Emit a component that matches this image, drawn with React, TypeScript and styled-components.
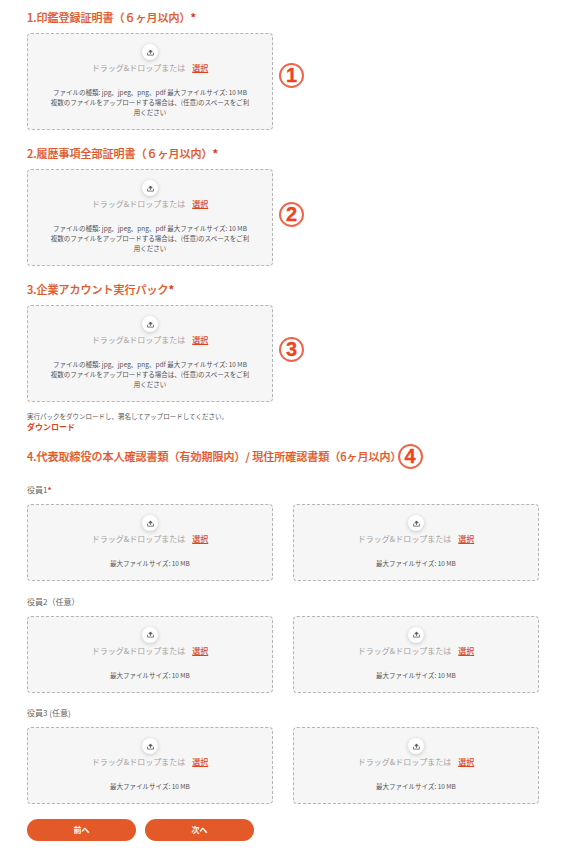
import styled, { createGlobalStyle } from "styled-components";

const GlobalStyle = createGlobalStyle`
  html, body {
    margin: 0;
    padding: 0;
    background: #fff;
    font-family: "Noto Sans CJK JP", "Noto Sans", sans-serif;
  }
`;

const LONG_NOTE = [
  "ファイルの種類: jpg、jpeg、png、pdf 最大ファイルサイズ: 10 MB",
  "複数のファイルをアップロードする場合は、(任意)のスペースをご利用ください",
];

const UploadBox = ({ short }: { short?: boolean }) => (
  <Box $short={short}>
    <IconCircle>
      <svg width="7" height="7" viewBox="0 0 24 24" fill="none" stroke="#555" strokeWidth="2.6" strokeLinecap="round" strokeLinejoin="round">
        <path d="M2 14v7h20v-7" />
        <path d="M12 16V6" />
        <path d="M7 9l5-6 5 6z" fill="#555" />
      </svg>
    </IconCircle>
    <DropLine>
      ドラッグ&ドロップまたは<Pick>選択</Pick>
    </DropLine>
    {short ? (
      <Note>最大ファイルサイズ: 10 MB</Note>
    ) : (
      <Note>
        {LONG_NOTE[0]}
        <br />
        {LONG_NOTE[1]}
      </Note>
    )}
  </Box>
);

const App = () => {
  return (
    <Page>
      <GlobalStyle />
      <Section>
        <Heading>
          1.印鑑登録証明書（６ヶ月以内）<Star>*</Star>
        </Heading>
        <BoxRow>
          <UploadBox />
          <Mark $top={30}>1</Mark>
        </BoxRow>
      </Section>
      <Section>
        <Heading>
          2.履歴事項全部証明書（６ヶ月以内）<Star>*</Star>
        </Heading>
        <BoxRow>
          <UploadBox />
          <Mark $top={33}>2</Mark>
        </BoxRow>
      </Section>
      <Section>
        <Heading>
          3.企業アカウント実行パック<Star>*</Star>
        </Heading>
        <BoxRow>
          <UploadBox />
          <Mark $top={32}>3</Mark>
        </BoxRow>
      </Section>
      <PackNote>実行パックをダウンロードし、署名してアップロードしてください。</PackNote>
      <DownloadLink>ダウンロード</DownloadLink>
      <WideHeading>
        4.代表取締役の本人確認書類（有効期限内）/ 現住所確認書類（6ヶ月以内）
        <InlineMark>4</InlineMark>
      </WideHeading>
      <Officer>
        <OfficerLabel>
          役員1<Star>*</Star>
        </OfficerLabel>
        <TwoCols>
          <UploadBox short />
          <UploadBox short />
        </TwoCols>
      </Officer>
      <Officer>
        <OfficerLabel>役員2（任意）</OfficerLabel>
        <TwoCols>
          <UploadBox short />
          <UploadBox short />
        </TwoCols>
      </Officer>
      <Officer>
        <OfficerLabel>役員3 (任意)</OfficerLabel>
        <TwoCols>
          <UploadBox short />
          <UploadBox short />
        </TwoCols>
      </Officer>
      <Buttons>
        <NavButton>前へ</NavButton>
        <NavButton>次へ</NavButton>
      </Buttons>
    </Page>
  );
};

const Page = styled.div`
  width: 588px;
  height: 851px;
  box-sizing: border-box;
  padding: 9px 0 0 27px;
  overflow: hidden;
`;

const Section = styled.section`
  margin-bottom: 15px;
`;

const Heading = styled.h2`
  margin: 0 0 8px;
  font-size: 11px;
  line-height: 16px;
  font-weight: 500;
  color: #e0592b;
  -webkit-text-stroke: 0.2px #e0592b;
`;

const Star = styled.span`
  color: #d8342a;
  font-weight: 700;
`;

const BoxRow = styled.div`
  position: relative;
  width: 246px;
`;

const Box = styled.div<{ $short?: boolean }>`
  box-sizing: border-box;
  width: 246px;
  height: ${(props) => (props.$short ? "77px" : "97px")};
  padding-top: 10px;
  background: #f6f6f6;
  border: 1px dashed #b5b5b5;
  border-radius: 4px;
  display: flex;
  flex-direction: column;
  align-items: center;
`;

const IconCircle = styled.div`
  width: 16px;
  height: 16px;
  border-radius: 50%;
  background: #fff;
  box-shadow: 0 1px 4px rgba(0, 0, 0, 0.2);
  display: flex;
  align-items: center;
  justify-content: center;
`;

const DropLine = styled.div`
  margin-top: 1px;
  font-size: 8px;
  line-height: 14px;
  color: #a2a2a2;
`;

const Pick = styled.span`
  margin-left: 7px;
  color: #d9481c;
  font-weight: 500;
  text-decoration: underline;
`;

const Note = styled.div`
  margin-top: 12px;
  width: 204px;
  font-size: 6.5px;
  line-height: 10px;
  text-align: center;
  color: #555;
`;

const Mark = styled.span<{ $top: number }>`
  position: absolute;
  left: 252px;
  top: ${(props) => props.$top}px;
  box-sizing: border-box;
  width: 25px;
  height: 25px;
  border: 2px solid #f0654a;
  border-radius: 50%;
  display: flex;
  align-items: center;
  justify-content: center;
  font-family: "Liberation Sans", sans-serif;
  font-size: 20px;
  font-weight: 700;
  color: #ee4520;
  -webkit-text-stroke: 0.3px #ee4520;
`;

const PackNote = styled.p`
  margin: -7px 0 0;
  font-size: 6.5px;
  line-height: 12px;
  color: #555;
`;

const DownloadLink = styled.a`
  display: block;
  margin-top: -1px;
  font-size: 8px;
  line-height: 12px;
  font-weight: 700;
  color: #d9481c;
`;

const WideHeading = styled(Heading)`
  margin: 11px 0 16px;
  display: flex;
  align-items: center;
  height: 24px;
`;

const InlineMark = styled.span`
  margin-left: -4px;
  box-sizing: border-box;
  flex: none;
  width: 25px;
  height: 25px;
  border: 2px solid #f0654a;
  border-radius: 50%;
  display: flex;
  align-items: center;
  justify-content: center;
  font-family: "Liberation Sans", sans-serif;
  font-size: 20px;
  font-weight: 700;
  color: #ee4520;
  -webkit-text-stroke: 0.3px #ee4520;
`;

const Officer = styled.div`
  margin-bottom: 14.5px;
`;

const OfficerLabel = styled.div`
  margin-bottom: 8px;
  font-size: 8px;
  line-height: 12px;
  color: #666;
`;

const TwoCols = styled.div`
  display: grid;
  grid-template-columns: 246px 246px;
  column-gap: 20px;
`;

const Buttons = styled.div`
  display: flex;
  gap: 9px;
  margin-top: 2.5px;
`;

const NavButton = styled.button`
  width: 109px;
  height: 22px;
  padding: 0;
  border: none;
  border-radius: 11px;
  background: #e35a28;
  color: #fff;
  font-family: inherit;
  font-size: 8px;
  font-weight: 700;
`;

export default App;
